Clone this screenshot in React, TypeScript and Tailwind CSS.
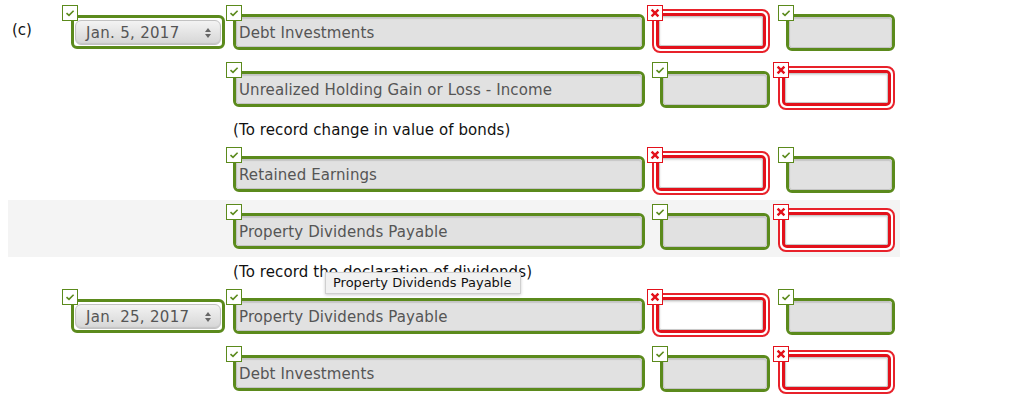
import React from "react";

type Mark = "ok" | "bad";

type Row = {
  kind: "row";
  label?: string;
  date?: string;
  account: string;
  debit: Mark;
  credit: Mark;
  highlight?: boolean;
};

type Note = { kind: "note"; text: string };

const lines: (Row | Note)[] = [
  {
    kind: "row",
    label: "(c)",
    date: "Jan. 5, 2017",
    account: "Debt Investments",
    debit: "bad",
    credit: "ok",
  },
  {
    kind: "row",
    account: "Unrealized Holding Gain or Loss - Income",
    debit: "ok",
    credit: "bad",
  },
  { kind: "note", text: "(To record change in value of bonds)" },
  { kind: "row", account: "Retained Earnings", debit: "bad", credit: "ok" },
  {
    kind: "row",
    account: "Property Dividends Payable",
    debit: "ok",
    credit: "bad",
    highlight: true,
  },
  { kind: "note", text: "(To record the declaration of dividends)" },
  {
    kind: "row",
    date: "Jan. 25, 2017",
    account: "Property Dividends Payable",
    debit: "bad",
    credit: "ok",
  },
  { kind: "row", account: "Debt Investments", debit: "ok", credit: "bad" },
];

function StatusIcon({ mark, className }: { mark: Mark; className: string }) {
  if (mark === "ok") {
    return (
      <span
        className={`absolute z-10 flex h-4 w-4 items-center justify-center border border-[#5b8a1c] bg-white ${className}`}
      >
        <svg width="12" height="12" viewBox="0 0 12 12">
          <path
            d="M2.5 6.2 L5 8.4 L9.6 3.8"
            fill="none"
            stroke="#5b8a1c"
            strokeWidth="1.6"
          />
        </svg>
      </span>
    );
  }
  return (
    <span
      className={`absolute z-10 flex h-4 w-4 items-center justify-center border border-[#e3111b] bg-white ${className}`}
    >
      <svg width="12" height="12" viewBox="0 0 12 12">
        <path
          d="M2.6 2.6 L9.4 9.4 M9.4 2.6 L2.6 9.4"
          fill="none"
          stroke="#e3111b"
          strokeWidth="2.4"
        />
      </svg>
    </span>
  );
}

// green framed, filled grey input
function GoodBox({ text, tall }: { text?: string; tall?: boolean }) {
  return (
    <div
      className={`${tall ? "h-[37px]" : "h-[36px]"} rounded-[6px] border-[3px] border-[#5b8a1c] bg-white`}
    >
      <div className="flex h-full items-center rounded-[3px] border border-[#c4c4c4] bg-[#e1e1e1] pl-[2px] pt-[2px] text-[15px] tracking-[0.1px] text-[#555] shadow-[inset_0_1px_1px_rgba(0,0,0,0.12)]">
        {text}
      </div>
    </div>
  );
}

// red double framed, empty white input
function BadBox() {
  return (
    <div className="h-[44px] rounded-[8px] border-2 border-[#e8222b] bg-white p-[2px]">
      <div className="h-full rounded-[5px] border-[3px] border-[#e3111b]">
        <div className="h-full rounded-[2px] border border-[#c8c8c8] bg-white shadow-[inset_0_1px_2px_rgba(0,0,0,0.15)]" />
      </div>
    </div>
  );
}

function AmountCell({ mark, pad }: { mark: Mark; pad: string }) {
  return (
    <div className={`relative ${pad}`}>
      {mark === "ok" ? (
        <>
          <StatusIcon mark="ok" className="left-0 top-0" />
          <div className="ml-[8px] mt-[9px]">
            <GoodBox tall />
          </div>
        </>
      ) : (
        <>
          <StatusIcon mark="bad" className="left-[-5px] top-0" />
          <div className="mt-[4px]">
            <BadBox />
          </div>
        </>
      )}
    </div>
  );
}

function DateSelect({ value }: { value: string }) {
  return (
    <div className="h-[34px] rounded-[6px] border-[3px] border-[#5b8a1c] bg-white px-px pb-px pt-[2px]">
      <div className="flex h-full items-center justify-between rounded-[6px] border border-[#c2c2c2] bg-gradient-to-b from-[#f3f3f3] to-[#d6d6d6] pl-[10px] pr-[8px] pt-px text-[15px] tracking-[0.3px] text-[#555] shadow-[inset_0_-1px_1px_rgba(0,0,0,0.08)]">
        <span>{value}</span>
        <svg width="8" height="12" viewBox="0 0 8 12">
          <path d="M4 1 L7 5 L1 5 Z M4 11 L7 7 L1 7 Z" fill="#666" />
        </svg>
      </div>
    </div>
  );
}

function EntryRow({ row }: { row: Row }) {
  return (
    <div
      className={`flex h-[57px] pt-[4px] ${row.highlight ? "bg-[#f4f4f4]" : ""}`}
    >
      <div className="w-[54px] pl-[4px] pt-[15px] text-[15px] leading-5 text-[#111]">
        {row.label}
      </div>
      <div className="relative w-[164px] pr-px">
        {row.date && (
          <>
            <StatusIcon mark="ok" className="left-0 top-0" />
            <div className="ml-[9px] mt-[10px]">
              <DateSelect value={row.date} />
            </div>
          </>
        )}
      </div>
      <div className="relative w-[426px] pr-[7px]">
        <StatusIcon mark="ok" className="left-0 top-0" />
        <div className="ml-[7px] mt-[9px]">
          <GoodBox text={row.account} />
        </div>
      </div>
      <AmountCell mark={row.debit} pad="w-[126px] pr-[8px]" />
      <AmountCell mark={row.credit} pad="w-[117px]" />
    </div>
  );
}

export default function App() {
  return (
    <div className="relative h-[417px] w-[1024px] overflow-hidden bg-white pt-px font-['DejaVu_Sans',Verdana,sans-serif]">
      <div className="ml-[8px] w-[892px]">
        {lines.map((line, i) =>
          line.kind === "row" ? (
            <EntryRow key={i} row={line} />
          ) : (
            <div
              key={i}
              className="h-[28px] pl-[225px] pt-[5px] text-[15px] leading-5 tracking-[0.1px] text-[#111]"
            >
              {line.text}
            </div>
          ),
        )}
      </div>

      {/* hover tooltip over the second note */}
      <div className="absolute left-[325px] top-[272px] flex h-[22px] w-[196px] items-center border border-[#cfcfcf] bg-[#f1f1f1] pl-[7px] text-[13px] text-[#111] shadow-[0_1px_3px_rgba(0,0,0,0.2)]">
        Property Dividends Payable
      </div>
    </div>
  );
}
